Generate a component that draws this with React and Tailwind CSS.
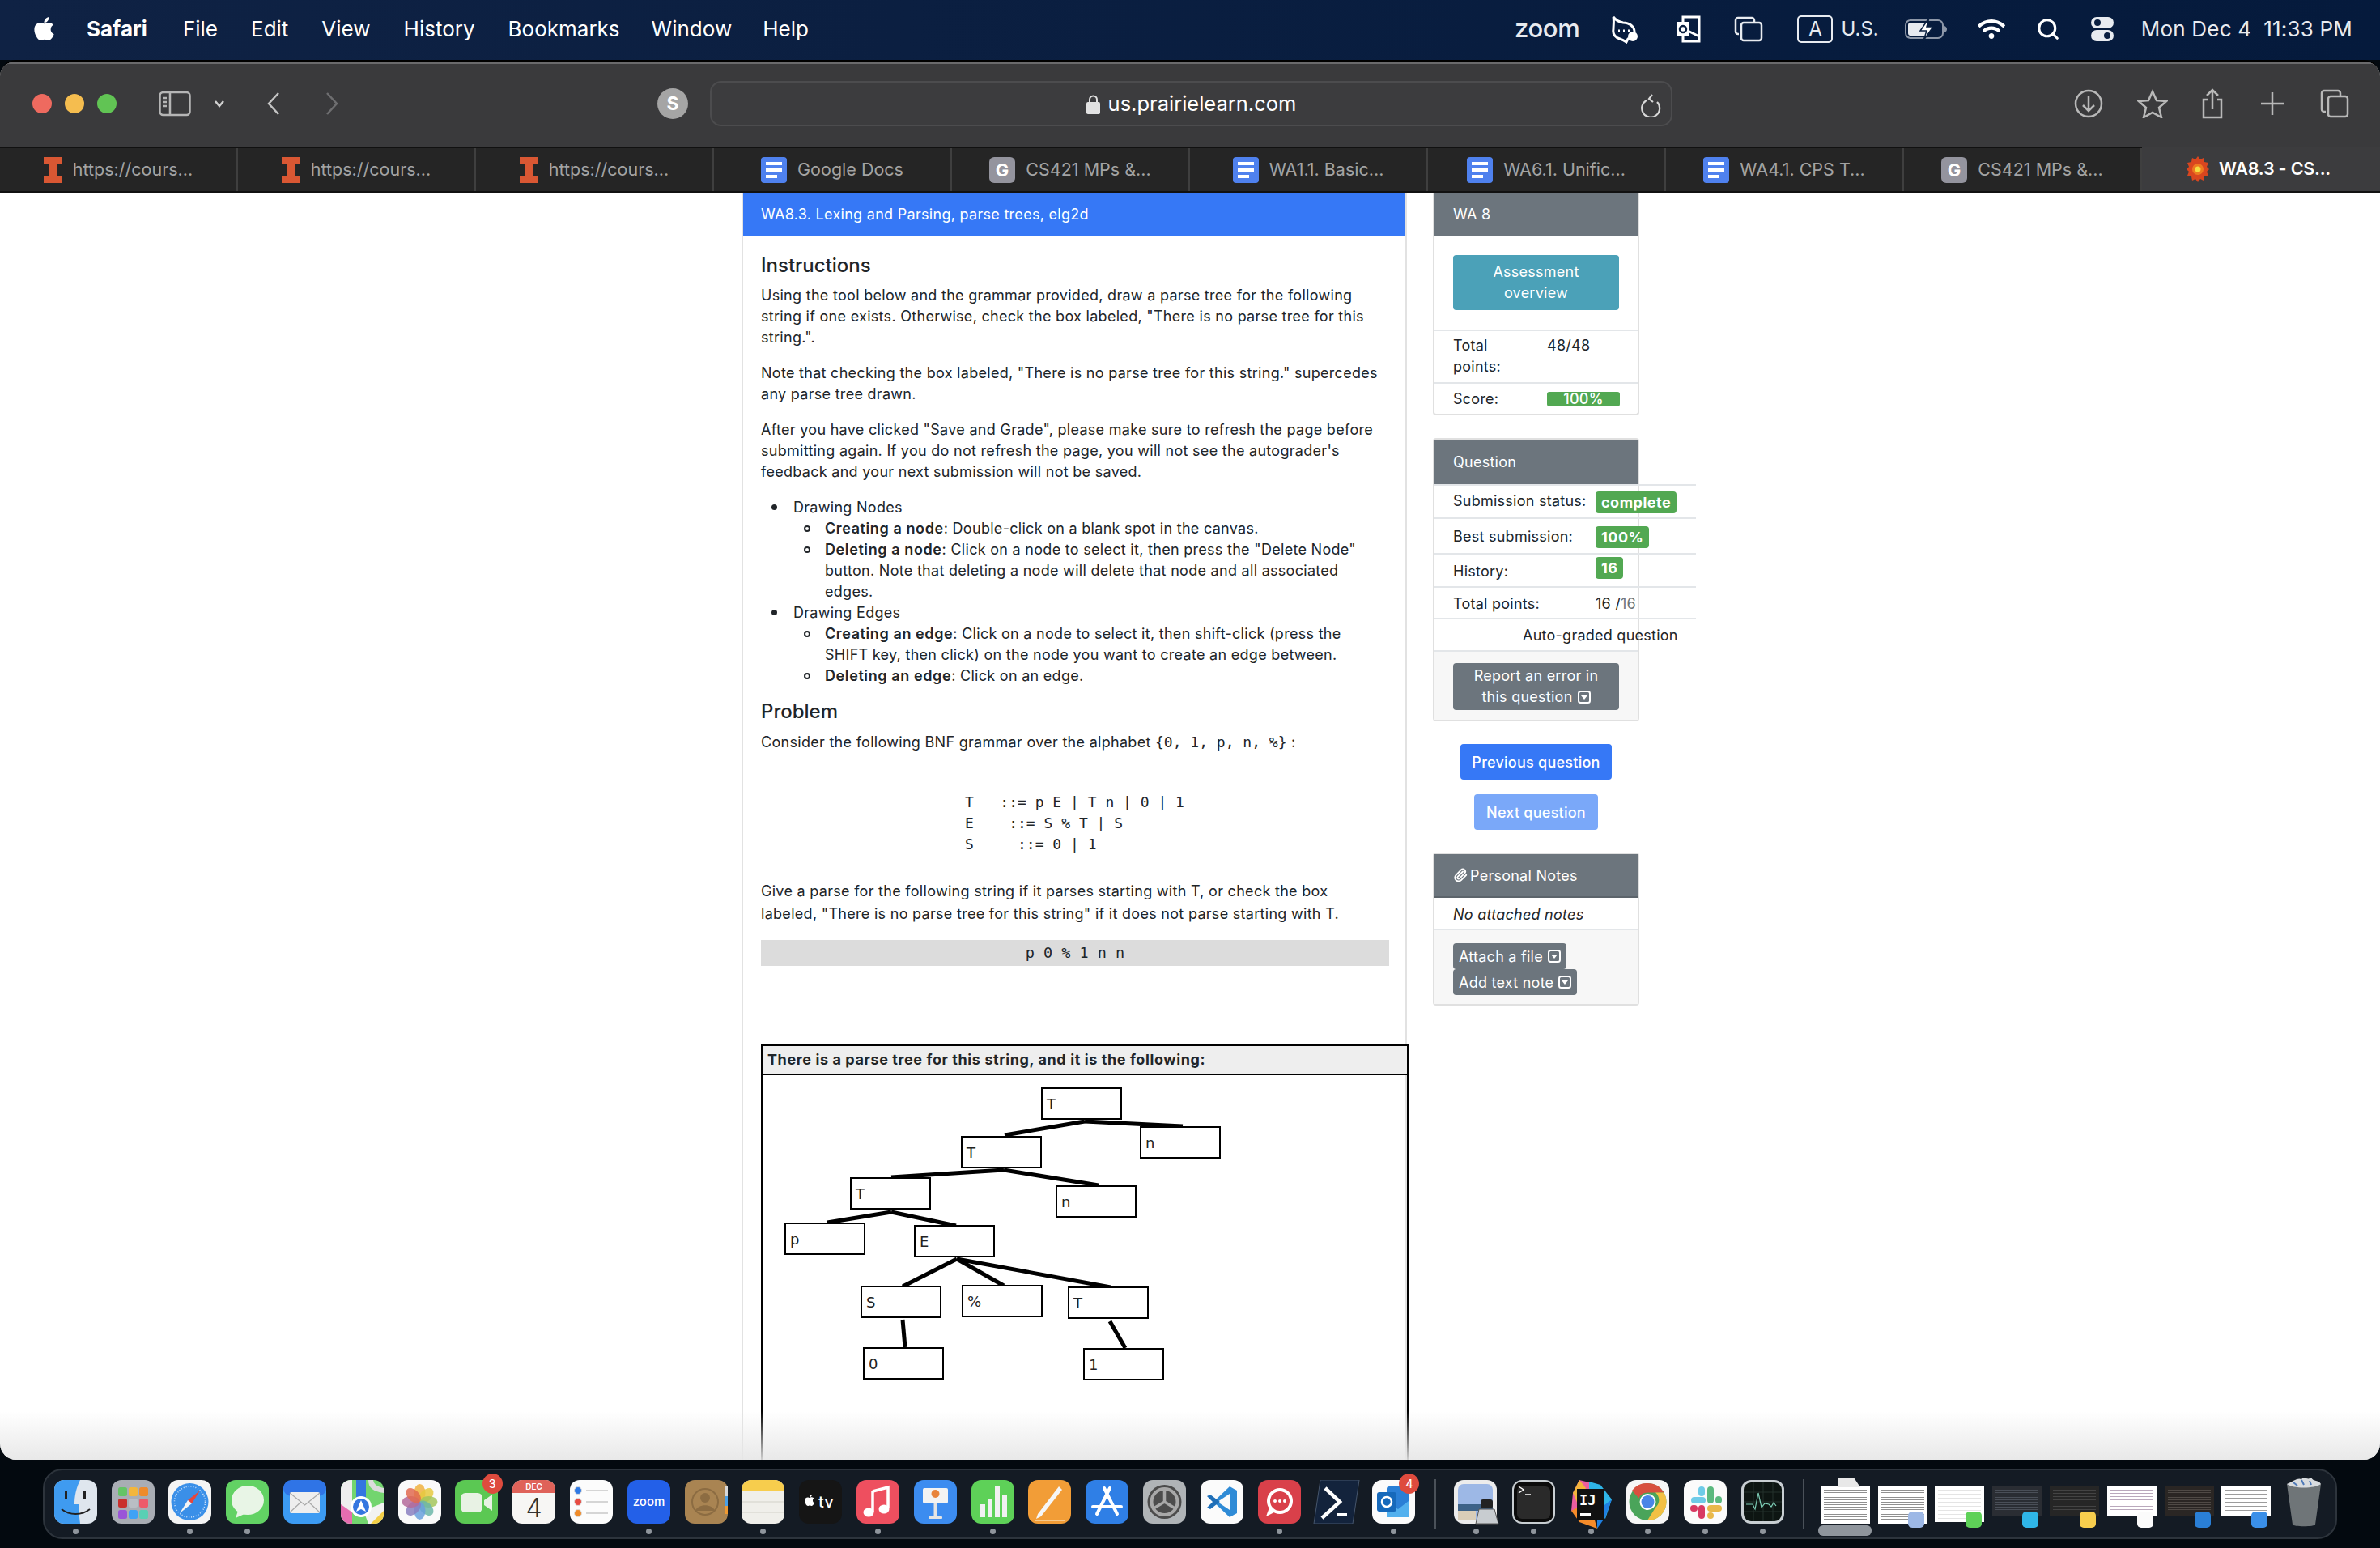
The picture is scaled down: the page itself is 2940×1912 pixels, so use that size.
import { FaApple, FaWifi } from "react-icons/fa";
import { Paperclip, Search } from "lucide-react";

const menuItems = [
  ["File", "ml-[44px]"],
  ["Edit", "ml-[41px]"],
  ["View", "ml-[41px]"],
  ["History", "ml-[41px]"],
  ["Bookmarks", "ml-[41px]"],
  ["Window", "ml-[39px]"],
  ["Help", "ml-[38px]"],
];

function IlliniIcon() {
  return (
    <svg width="23" height="32" viewBox="0 0 23 32">
      <path d="M0 0h23v8h-6v16h6v8H0v-8h6V8H0z" fill="#d95733" />
    </svg>
  );
}

function DocsIcon() {
  return (
    <svg width="32" height="32" viewBox="0 0 32 32">
      <rect width="32" height="32" rx="4" fill="#4f81ee" />
      <rect x="6" y="6" width="20" height="4" fill="#fff" />
      <rect x="6" y="14" width="20" height="4" fill="#fff" />
      <rect x="6" y="22" width="14" height="4" fill="#fff" />
    </svg>
  );
}

function GradeIcon() {
  return (
    <svg width="32" height="32" viewBox="0 0 32 32">
      <rect width="32" height="32" rx="6" fill="#94949e" />
      <text x="16" y="24" textAnchor="middle" fontSize="22" fontWeight="700" fill="#fff" fontFamily="Inter, sans-serif">G</text>
    </svg>
  );
}

function BurstIcon() {
  return (
    <svg width="28" height="32" viewBox="0 0 28 32">
      <path d="M14 0l3 4 4-2 1 5 5 1-2 5 3 3-3 3 2 5-5 1-1 5-4-2-3 4-3-4-4 2-1-5-5-1 2-5-3-3 3-3-2-5 5-1 1-5 4 2z" fill="#d9461f" />
      <circle cx="14" cy="16" r="7" fill="#ee7a20" />
      <circle cx="14" cy="16" r="3.5" fill="#f4dd42" />
    </svg>
  );
}

const tabs = [
  [IlliniIcon, "https://cours..."],
  [IlliniIcon, "https://cours..."],
  [IlliniIcon, "https://cours..."],
  [DocsIcon, "Google Docs"],
  [GradeIcon, "CS421 MPs &..."],
  [DocsIcon, "WA1.1. Basic..."],
  [DocsIcon, "WA6.1. Unific..."],
  [DocsIcon, "WA4.1. CPS T..."],
  [GradeIcon, "CS421 MPs &..."],
];

function MenuBar() {
  return (
    <div className="flex h-[74px] items-center bg-gradient-to-r from-[#0f2244] to-[#051a3c] pb-[3px] pl-[38px] pr-[34px] text-[26px] text-white">
      <FaApple className="mr-[36px] h-[33px] w-[33px]" />
      <span className="font-bold">Safari</span>
      {menuItems.map(([label, gap]) => (
        <span key={label} className={gap}>{label}</span>
      ))}
      <div className="ml-auto flex items-center text-[#e8ebf0]">
        <span className="mr-[36px] text-[31px] font-medium tracking-[-0.01em]">zoom</span>
        <svg className="mr-[44px]" width="38" height="36" viewBox="0 0 38 36" fill="none" stroke="#fff" strokeWidth="3">
          <path d="M6 3c3 4 6 6 12 7 8 0 14 5 14 11 0 5-4 8-8 9l-2 4c-3-2-5-3-8-4-6-2-9-6-8-12 0-5 1-10 0-15z" />
          <path d="M12 20h2M18 20h2M24 20h2" />
          <circle cx="30" cy="27" r="6" fill="#fff" stroke="none" />
        </svg>
        <svg className="mr-[41px]" width="32" height="34" viewBox="0 0 32 34" fill="none" stroke="#fff" strokeWidth="3">
          <rect x="10" y="2" width="20" height="30" />
          <path d="M10 16l20 10" />
          <rect x="2" y="8" width="16" height="18" fill="#fff" stroke="none" />
          <circle cx="10" cy="17" r="4" stroke="#0a1f40" strokeWidth="2.5" />
        </svg>
        <svg className="mr-[42px]" width="36" height="32" viewBox="0 0 36 32" fill="none" stroke="#e8ebf0" strokeWidth="2.5">
          <path d="M6 22H5a3 3 0 0 1-3-3V5a3 3 0 0 1 3-3h17a3 3 0 0 1 3 3v2" />
          <rect x="9" y="8" width="25" height="22" rx="3" />
        </svg>
        <span className="mr-[10px] flex h-[34px] w-[44px] items-center justify-center rounded-[5px] border-2 border-[#e8ebf0] text-[24px] leading-none">A</span>
        <span className="mr-[32px] text-[24px]">U.S.</span>
        <svg className="mr-[38px]" width="52" height="28" viewBox="0 0 52 28">
          <rect x="1" y="3" width="46" height="22" rx="6" fill="none" stroke="#8d97a8" strokeWidth="2" />
          <rect x="4" y="6" width="24" height="16" rx="3" fill="#e8ebf0" />
          <path d="M49 10v8c2-1 3-2 3-4s-1-3-3-4z" fill="#8d97a8" />
          <path d="M30 0L19 16h8l-4 12 12-17h-8z" fill="#fff" stroke="#0a1f40" strokeWidth="1.5" />
        </svg>
        <FaWifi className="mr-[38px] h-[30px] w-[34px] text-white" />
        <Search className="mr-[38px] h-[30px] w-[30px] text-white" strokeWidth={2.5} />
        <svg className="mr-[34px]" width="28" height="30" viewBox="0 0 28 30">
          <rect width="28" height="14" rx="7" fill="#e8ebf0" />
          <circle cx="8" cy="7" r="4" fill="#0a1f40" />
          <rect y="16" width="28" height="14" rx="7" fill="#e8ebf0" />
          <circle cx="20" cy="23" r="4" fill="#0a1f40" />
        </svg>
        <span className="whitespace-pre text-[26px] tracking-[0.2px]">Mon Dec 4  11:33 PM</span>
      </div>
    </div>
  );
}

function Toolbar() {
  return (
    <div className="flex h-[105px] shrink-0 items-center border-t-[3px] border-[#6a6a6c] bg-[#3a3a3c] pb-[4px] pl-[40px] text-[#c8c8c8]">
      <span className="h-[24px] w-[24px] rounded-full bg-[#ee6a5f]" />
      <span className="ml-[16px] h-[24px] w-[24px] rounded-full bg-[#f5bd4f]" />
      <span className="ml-[16px] h-[24px] w-[24px] rounded-full bg-[#61c454]" />
      <svg className="ml-[52px]" width="40" height="32" viewBox="0 0 40 32" fill="none" stroke="#b5b5b5" strokeWidth="2.5">
        <rect x="1.5" y="2" width="37" height="28" rx="4" />
        <path d="M14 2v28M5 9h5M5 14h5M5 19h5" />
      </svg>
      <svg className="ml-[28px]" width="14" height="10" viewBox="0 0 14 10" fill="none" stroke="#d0d0d0" strokeWidth="2.5">
        <path d="M2 2l5 6 5-6" />
      </svg>
      <svg className="ml-[51px]" width="18" height="30" viewBox="0 0 18 30" fill="none" stroke="#c4c4c4" strokeWidth="2.5">
        <path d="M15 2L3 15l12 13" />
      </svg>
      <svg className="ml-[54px]" width="18" height="30" viewBox="0 0 18 30" fill="none" stroke="#6e6e70" strokeWidth="2.5">
        <path d="M3 2l12 13L3 28" />
      </svg>
      <svg className="ml-[393px]" width="38" height="38" viewBox="0 0 38 38">
        <circle cx="19" cy="19" r="19" fill="#a5a5a5" />
        <text x="19" y="27" textAnchor="middle" fontSize="23" fontWeight="700" fill="#fff" fontFamily="Inter, sans-serif">S</text>
      </svg>
      <div className="relative ml-[27px] flex h-[56px] w-[1189px] items-center justify-center rounded-[14px] border-2 border-[#4c4c4e] bg-[#3c3c3e] text-[25.5px] text-white">
        <svg className="mr-[10px]" width="17" height="25" viewBox="0 0 17 25">
          <path d="M4 11V7a4.5 4.5 0 0 1 9 0v4" fill="none" stroke="#e2e2e2" strokeWidth="2" />
          <rect y="10" width="17" height="15" rx="2" fill="#e2e2e2" />
        </svg>
        us.prairielearn.com
        <svg className="absolute right-[12px] top-[13px]" width="26" height="30" viewBox="0 0 26 30" fill="none" stroke="#d8d8d8" strokeWidth="2.2">
          <path d="M8 9a11 11 0 1 0 13 2M15 2l-4 5 5 4" />
        </svg>
      </div>
      <svg className="ml-[496px]" width="36" height="36" viewBox="0 0 36 36" fill="none" stroke="#b8b8b8" strokeWidth="2.5">
        <circle cx="18" cy="18" r="16" />
        <path d="M18 9v17M11 20l7 7 7-7" />
      </svg>
      <svg className="ml-[42px]" width="38" height="36" viewBox="0 0 38 36" fill="none" stroke="#b8b8b8" strokeWidth="2.5">
        <path d="M19 3l5 11 12 1-9 8 3 12-11-6-11 6 3-12-9-8 12-1z" />
      </svg>
      <svg className="ml-[39px]" width="32" height="38" viewBox="0 0 32 38" fill="none" stroke="#b8b8b8" strokeWidth="2.5">
        <path d="M16 26V3M9 9l7-7 7 7M10 14H5v22h22V14h-5" />
      </svg>
      <svg className="ml-[43px]" width="30" height="30" viewBox="0 0 30 30" stroke="#b8b8b8" strokeWidth="2.5">
        <path d="M15 1v28M1 15h28" />
      </svg>
      <svg className="ml-[44px]" width="36" height="36" viewBox="0 0 36 36" fill="none" stroke="#b8b8b8" strokeWidth="2.5">
        <path d="M7 28H5a3 3 0 0 1-3-3V5a3 3 0 0 1 3-3h17a3 3 0 0 1 3 3v3" />
        <rect x="10" y="9" width="24" height="25" rx="3" />
      </svg>
    </div>
  );
}

function TabBar() {
  return (
    <div className="flex h-[57px] shrink-0 border-y-2 border-[#111111] bg-[#252525]">
      {tabs.map(([Icon, label], index) => (
        <div key={index} className="flex w-[294px] items-center justify-center gap-[13px] border-r-2 border-[#3f3f3f] text-[21.5px] text-[#a3a3a3]">
          <Icon />
          <span>{label}</span>
        </div>
      ))}
      <div className="-mt-[2px] flex flex-1 items-center justify-center gap-[12px] bg-[#3c3c3e] pr-[6px] text-[21.5px] font-semibold tracking-[-0.2px] text-white">
        <BurstIcon />
        <span>WA8.3 - CS...</span>
      </div>
    </div>
  );
}

const treeNodes = [
  ["T", 1287, 1344],
  ["n", 1409, 1392],
  ["T", 1188, 1404],
  ["T", 1051, 1455],
  ["n", 1305, 1465],
  ["p", 970, 1511],
  ["E", 1130, 1514],
  ["S", 1064, 1589],
  ["%", 1189, 1588],
  ["T", 1320, 1590],
  ["0", 1067, 1665],
  ["1", 1339, 1666],
];

const treeEdges = [
  [1340, 1385, 1241, 1402],
  [1340, 1385, 1461, 1391],
  [1240, 1445, 1101, 1454],
  [1240, 1445, 1357, 1464],
  [1101, 1497, 1022, 1510],
  [1101, 1497, 1181, 1514],
  [1182, 1555, 1115, 1589],
  [1182, 1555, 1240, 1588],
  [1182, 1555, 1372, 1590],
  [1115, 1630, 1118, 1664],
  [1371, 1632, 1390, 1665],
];

function ParseTree() {
  return (
    <svg className="block" width="796" height="480" viewBox="942 1328 796 480">
      {treeEdges.map(([x1, y1, x2, y2], i) => (
        <line key={i} x1={x1} y1={y1} x2={x2} y2={y2} stroke="#000" strokeWidth="5" />
      ))}
      {treeNodes.map(([label, x, y], i) => (
        <g key={i}>
          <rect x={x} y={y} width="98" height="38" fill="#fff" stroke="#000" strokeWidth="2" />
          <text x={x + 6} y={y + 26} fontSize="18" fill="#222" fontFamily="'DejaVu Sans', sans-serif">{label}</text>
        </g>
      ))}
    </svg>
  );
}

function Disc() {
  return <span className="absolute -left-[27px] top-[9px] h-[7px] w-[7px] rounded-full bg-[#212529]" />;
}

function Ring() {
  return <span className="absolute -left-[26px] top-[9px] h-[8px] w-[8px] rounded-full border-2 border-[#212529]" />;
}

function MainColumn() {
  return (
    <div className="ml-[916px] w-[822px] shrink-0 border-x-2 border-[#e2e2e2]">
      <div className="flex h-[53px] items-center bg-[#3678f6] pl-[22px] text-[18px] tracking-[0.29px] text-white">
        WA8.3. Lexing and Parsing, parse trees, elg2d
      </div>
      <div className="pl-[22px] pt-[22px] text-[18px] leading-[26px] tracking-[0.29px] text-[#212529]">
        <h2 className="mb-[10px] text-[24px] font-medium leading-[29px] tracking-normal">Instructions</h2>
        <div className="w-[790px]">
          <p className="mb-[18px]">
            Using the tool below and the grammar provided, draw a parse tree for the following<br />
            string if one exists. Otherwise, check the box labeled, "There is no parse tree for this<br />
            string.".
          </p>
          <p className="mb-[18px]">
            Note that checking the box labeled, "There is no parse tree for this string." supercedes<br />
            any parse tree drawn.
          </p>
          <p className="mb-[18px]">
            After you have clicked "Save and Grade", please make sure to refresh the page before<br />
            submitting again. If you do not refresh the page, you will not see the autograder's<br />
            feedback and your next submission will not be saved.
          </p>
          <ul className="mb-[16px] list-none pl-[40px]">
            <li className="relative">
              <Disc />
              Drawing Nodes
              <ul className="list-none pl-[39px]">
                <li className="relative"><Ring /><b className="font-semibold tracking-[0.6px]">Creating a node</b>: Double-click on a blank spot in the canvas.</li>
                <li className="relative">
                  <Ring />
                  <b className="font-semibold tracking-[0.6px]">Deleting a node</b>: Click on a node to select it, then press the "Delete Node"<br />
                  button. Note that deleting a node will delete that node and all associated<br />
                  edges.
                </li>
              </ul>
            </li>
            <li className="relative">
              <Disc />
              Drawing Edges
              <ul className="list-none pl-[39px]">
                <li className="relative">
                  <Ring />
                  <b className="font-semibold tracking-[0.6px]">Creating an edge</b>: Click on a node to select it, then shift-click (press the<br />
                  SHIFT key, then click) on the node you want to create an edge between.
                </li>
                <li className="relative"><Ring /><b className="font-semibold tracking-[0.6px]">Deleting an edge</b>: Click on an edge.</li>
              </ul>
            </li>
          </ul>
          <h2 className="mb-[11px] text-[24px] font-medium leading-[29px] tracking-normal">Problem</h2>
          <p>
            Consider the following BNF grammar over the alphabet{" "}
            <code className="font-['DejaVu_Sans_Mono',monospace] text-[18px] tracking-normal">{"{0, 1, p, n, %}"}</code> :
          </p>
          <pre className="ml-[252px] mt-[48px] font-['DejaVu_Sans_Mono',monospace] text-[18px] leading-[26px] tracking-normal">
            {"T   ::= p E | T n | 0 | 1\nE    ::= S % T | S\nS     ::= 0 | 1"}
          </pre>
          <p className="mt-[31px] leading-[28px]">
            Give a parse for the following string if it parses starting with T, or check the box<br />
            labeled, "There is no parse tree for this string" if it does not parse starting with T.
          </p>
        </div>
        <div className="mt-[18px] flex h-[32px] w-[776px] items-center justify-center bg-[#dcdcdc] font-['DejaVu_Sans_Mono',monospace] text-[18.5px] tracking-normal">
          p 0 % 1 n n
        </div>
        <div className="mt-[97px] w-[800px] border-2 border-black">
          <div className="flex h-[36px] items-center border-b-2 border-black bg-[#eeeeee] pl-[6px] font-bold tracking-[0.6px]">
            There is a parse tree for this string, and it is the following:
          </div>
          <ParseTree />
        </div>
      </div>
    </div>
  );
}

function Caret() {
  return (
    <svg className="ml-[6px] inline align-[-2px]" width="16" height="16" viewBox="0 0 16 16">
      <rect x="1" y="1" width="14" height="14" rx="2.5" fill="none" stroke="#fff" strokeWidth="2" />
      <path d="M4 6h8l-4 5z" fill="#fff" />
    </svg>
  );
}

function Badge({ children, extra }) {
  return (
    <span className={`flex h-[27px] items-center rounded-[4px] bg-[#52a852] px-[7px] text-[18px] font-bold tracking-[0.5px] text-white ${extra || ""}`}>
      {children}
    </span>
  );
}

function Sidebar() {
  return (
    <div className="ml-[32px] w-[255px] shrink-0 text-[18px] tracking-[0.25px] text-[#212529]">
      <div className="rounded-b-[4px] border-x-2 border-b-2 border-[#e0e0e0]">
        <div className="flex h-[54px] items-center bg-[#6c757d] pb-[1px] pl-[23px] text-white">WA 8</div>
        <div className="border-b-2 border-[#e3e6e9] px-[23px] pb-[24px] pt-[23px]">
          <div className="flex h-[68px] items-center justify-center rounded-[4px] bg-[#4ba1b8] text-center leading-[26px] text-white">
            Assessment<br />overview
          </div>
        </div>
        <div className="flex h-[65px] border-b-2 border-[#e3e6e9] pl-[23px] pt-[5px] leading-[26px]">
          <span className="w-[116px]">Total<br />points:</span>
          <span>48/48</span>
        </div>
        <div className="flex h-[37px] items-center pl-[23px]">
          <span className="w-[116px]">Score:</span>
          <span className="flex h-[18px] w-[90px] items-center justify-center rounded-[3px] bg-[#52a852] font-medium text-white">100%</span>
        </div>
      </div>
      <div className="mt-[28px] rounded-[4px] border-x-2 border-y-2 border-[#e0e0e0]">
        <div className="flex h-[55px] items-center bg-[#6c757d] pl-[23px] text-white">Question</div>
        <div className="w-[323px]">
          <div className="flex h-[43px] items-center border-y-2 border-[#e3e6e9] pl-[23px]">
            <span className="mb-[2px] w-[176px]">Submission status:</span>
            <Badge extra="mt-[2px]">complete</Badge>
          </div>
          <div className="flex h-[44px] items-center border-b-2 border-[#e3e6e9] pl-[23px]">
            <span className="w-[176px]">Best submission:</span>
            <Badge extra="mt-[2px]">100%</Badge>
          </div>
          <div className="flex h-[41px] items-center border-b-2 border-[#e3e6e9] pl-[23px]">
            <span className="mt-[1px] w-[176px]">History:</span>
            <Badge extra="mb-[7px]">16</Badge>
          </div>
          <div className="flex h-[39px] items-center border-b-2 border-[#e3e6e9] pl-[23px]">
            <span className="mt-[1px] w-[176px]">Total points:</span>
            <span className="mt-[1px]">16 /<span className="text-[#6c757d]">16</span></span>
          </div>
        </div>
        <div className="flex h-[38px] w-[301px] items-center whitespace-nowrap pl-[109px] pt-[1px]">Auto-graded question</div>
        <div className="border-t-2 border-[#e3e6e9] bg-[#f7f7f7] px-[23px] pb-[12px] pt-[14px]">
          <div className="flex h-[58px] items-center justify-center rounded-[4px] bg-[#6c757d] text-center leading-[26px] text-white">
            <span>Report an error in<br />this question<Caret /></span>
          </div>
        </div>
      </div>
      <div className="mt-[28px] flex flex-col items-center">
        <div className="flex h-[44px] w-[187px] items-center justify-center rounded-[4px] bg-[#3678f6] font-medium text-white">Previous question</div>
        <div className="mt-[18px] flex h-[44px] w-[153px] items-center justify-center rounded-[4px] bg-[#7aa8f9] font-medium text-white">Next question</div>
      </div>
      <div className="mt-[28px] rounded-[4px] border-2 border-[#e0e0e0]">
        <div className="flex h-[54px] items-center border-b-2 border-[#5c646b] bg-[#6c757d] pl-[23px] text-white">
          <Paperclip className="mr-[3px] h-[18px] w-[18px]" strokeWidth={2.5} />
          Personal Notes
        </div>
        <div className="flex h-[40px] items-center border-b-2 border-[#e3e6e9] pl-[23px] pt-[2px] italic">No attached notes</div>
        <div className="flex flex-col items-start bg-[#f7f7f7] pb-[11px] pl-[23px] pt-[16px]">
          <span className="flex h-[32px] items-center rounded-[4px] bg-[#6c757d] px-[7px] text-white">Attach a file<Caret /></span>
          <span className="flex h-[32px] items-center rounded-[4px] bg-[#6c757d] px-[7px] text-white">Add text note<Caret /></span>
        </div>
      </div>
    </div>
  );
}

function Shell({ bg, children }) {
  return (
    <svg width="53" height="54" viewBox="0 0 53 54">
      <rect width="53" height="54" rx="12" fill={bg} />
      {children}
    </svg>
  );
}

const dockIcons = {
  finder: (
    <Shell bg="#dfe6ee">
      <path d="M12 0h20c-5 10-7 20-7 30h5c0 8 1 16 2 24H12A12 12 0 0 1 0 42V12A12 12 0 0 1 12 0z" fill="#3f9bf0" />
      <rect x="13" y="14" width="3" height="9" fill="#222" />
      <rect x="36" y="14" width="3" height="9" fill="#222" />
      <path d="M9 36c10 8 25 8 35 0" fill="none" stroke="#222" strokeWidth="2" />
    </Shell>
  ),
  launchpad: (
    <Shell bg="#a9adb4">
      {[["#65c466", 8, 9], ["#f2b63c", 21, 9], ["#ef8b2c", 34, 9], ["#c9302c", 8, 23], ["#b9bec4", 21, 23], ["#ee5a6a", 34, 23], ["#9a55d8", 8, 37], ["#3fa2f5", 21, 37], ["#59d0b4", 34, 37]].map(([c, x, y]) => (
        <rect key={c} x={x} y={y} width="11" height="11" rx="2.5" fill={c} />
      ))}
    </Shell>
  ),
  safari: (
    <Shell bg="#f4f4f4">
      <circle cx="26.5" cy="27" r="23" fill="#3a8fe8" />
      <circle cx="26.5" cy="27" r="19" fill="none" stroke="#cfe3fa" strokeWidth="1.5" strokeDasharray="1 2" />
      <path d="M39 13L24 25l5 4z" fill="#e9453a" />
      <path d="M14 41l10-16 5 4z" fill="#f4f4f4" />
    </Shell>
  ),
  messages: (
    <Shell bg="#62d264">
      <ellipse cx="27" cy="25" rx="20" ry="18" fill="#e8f5e6" />
      <path d="M15 38l-3 9 11-5z" fill="#e8f5e6" />
    </Shell>
  ),
  mail: (
    <Shell bg="#3c9bf3">
      <rect width="53" height="20" rx="10" fill="#2f74e6" />
      <rect x="8" y="15" width="37" height="26" rx="2" fill="#eeeeee" />
      <path d="M8 16l18.5 15L45 16M8 40l14-13M45 40L31 27" fill="none" stroke="#a9a9a9" strokeWidth="1.2" />
    </Shell>
  ),
  maps: (
    <Shell bg="#73d56f">
      <path d="M0 12A12 12 0 0 1 12 0h2v54H12A12 12 0 0 1 0 42z" fill="#eee" />
      <path d="M0 30l14 10v14H12A12 12 0 0 1 0 42z" fill="#e66db0" />
      <rect x="19" y="0" width="12" height="30" fill="#3476e0" />
      <path d="M34 0c0 10 6 14 19 16v-6C44 8 41 5 40 0z" fill="#dcdcdc" />
      <path d="M28 38l25-10v14a12 12 0 0 1-12 12H34z" fill="#f2f2f2" />
      <path d="M37 54l16-16v4a12 12 0 0 1-12 12z" fill="#f4cf47" />
      <circle cx="25" cy="33" r="13" fill="#fff" />
      <circle cx="25" cy="33" r="10" fill="#3476e0" />
      <path d="M25 25l6 14-6-3-6 3z" fill="#fff" />
    </Shell>
  ),
  photos: (
    <Shell bg="#fafafa">
      {[["#f0b23f", 0], ["#e6c93f", 45], ["#a3c65a", 90], ["#6cb6a8", 135], ["#6aa0dc", 180], ["#8a7fc0", 225], ["#b46a9a", 270], ["#e06a50", 315]].map(([c, r]) => (
        <ellipse key={r} cx="26.5" cy="16" rx="7" ry="11" fill={c} opacity="0.85" transform={`rotate(${r} 26.5 27)`} />
      ))}
    </Shell>
  ),
  facetime: (
    <Shell bg="#5bc853">
      <rect x="7" y="16" width="27" height="24" rx="6" fill="#e8f2e4" />
      <path d="M36 25l10-7v20l-10-7z" fill="#e8f2e4" />
    </Shell>
  ),
  calendar: (
    <Shell bg="#f7f6f4">
      <path d="M0 16V12A12 12 0 0 1 12 0h29a12 12 0 0 1 12 12v4z" fill="#df6259" />
      <text x="26.5" y="12" textAnchor="middle" fontSize="10" fontWeight="600" fill="#fff" fontFamily="Inter, sans-serif">DEC</text>
      <text x="26.5" y="46" textAnchor="middle" fontSize="32" fontWeight="300" fill="#333" fontFamily="Inter, sans-serif">4</text>
    </Shell>
  ),
  reminders: (
    <Shell bg="#fcfcfc">
      {[["#2f7ae5", 13], ["#e84b42", 27], ["#f08c2a", 41]].map(([c, y]) => (
        <g key={y}>
          <circle cx="10" cy={y} r="4.5" fill={c} stroke="#ddd" />
          <path d={`M20 ${y}h27`} stroke="#c9c9c9" strokeWidth="1.5" />
        </g>
      ))}
    </Shell>
  ),
  zoom: (
    <Shell bg="#2360e8">
      <text x="26.5" y="32" textAnchor="middle" fontSize="15" fontWeight="500" fill="#fff" fontFamily="Inter, sans-serif">zoom</text>
    </Shell>
  ),
  contacts: (
    <Shell bg="#a98452">
      <rect x="50" y="8" width="3" height="12" fill="#d8d8d8" />
      <rect x="50" y="20" width="3" height="12" fill="#4aa0e6" />
      <rect x="50" y="32" width="3" height="10" fill="#ef9a32" />
      <circle cx="25" cy="27" r="16" fill="none" stroke="#8c6c42" strokeWidth="2" />
      <circle cx="25" cy="22" r="6" fill="#8c6c42" />
      <path d="M13 38c3-9 21-9 24 0" fill="#8c6c42" />
    </Shell>
  ),
  notes: (
    <Shell bg="#f0efea">
      <path d="M0 14V12A12 12 0 0 1 12 0h29a12 12 0 0 1 12 12v2z" fill="#f7cd4d" />
      <path d="M0 27h53M0 40h53" stroke="#dcdbd4" strokeWidth="1.5" />
    </Shell>
  ),
  tv: (
    <Shell bg="#151515">
      <FaApple x="5" y="17" width="18" height="18" color="#fff" />
      <text x="24" y="34" fontSize="20" fontWeight="500" fill="#fff" fontFamily="Inter, sans-serif">tv</text>
    </Shell>
  ),
  music: (
    <Shell bg="#ee4f5f">
      <path d="M20 14l19-5v26" fill="none" stroke="#fff" strokeWidth="3.5" />
      <path d="M20 14v26" stroke="#fff" strokeWidth="3.5" />
      <ellipse cx="15" cy="40" rx="6.5" ry="5.5" fill="#fff" />
      <ellipse cx="34" cy="36" rx="6.5" ry="5.5" fill="#fff" />
    </Shell>
  ),
  keynote: (
    <Shell bg="#3c8cf0">
      <rect x="11" y="10" width="31" height="19" rx="2" fill="#f3f3f3" />
      <circle cx="26.5" cy="17" r="5" fill="#e8833a" />
      <rect x="24.5" y="29" width="4" height="16" fill="#e4e4e4" />
      <rect x="18" y="45" width="17" height="3" rx="1" fill="#e4e4e4" />
    </Shell>
  ),
  numbers: (
    <Shell bg="#5ed158">
      <rect x="11" y="30" width="6" height="16" fill="#f1f1f1" />
      <rect x="20" y="24" width="6" height="22" fill="#f1f1f1" />
      <rect x="29" y="8" width="6" height="38" fill="#f1f1f1" />
      <rect x="38" y="18" width="6" height="28" fill="#f1f1f1" />
    </Shell>
  ),
  pages: (
    <Shell bg="#f29d37">
      <path d="M38 8L12 42l-2 6 6-3 26-33z" fill="#f6f6f6" />
      <path d="M8 50h37" stroke="#f9d9a8" strokeWidth="1.5" />
    </Shell>
  ),
  appstore: (
    <Shell bg="#2f7fe6">
      <path d="M23 10l16 32M30 10L14 42M9 33h35" stroke="#fff" strokeWidth="4" strokeLinecap="round" />
    </Shell>
  ),
  settings: (
    <Shell bg="#b0b4b7">
      <circle cx="26.5" cy="27" r="21" fill="#4c4c4c" />
      <circle cx="26.5" cy="27" r="16" fill="none" stroke="#a8a8a8" strokeWidth="4" />
      <path d="M26.5 27V12M26.5 27L13 35M26.5 27l13 8" stroke="#a8a8a8" strokeWidth="3.5" />
    </Shell>
  ),
  vscode: (
    <Shell bg="#fbfbfb">
      <path d="M36 8l9 5v28l-9 5-20-19z" fill="#2f8bd6" />
      <path d="M36 17L21 27l15 10z" fill="#fbfbfb" />
      <path d="M8 20l4-2 12 9-12 9-4-2 7-7z" fill="#1f6fb8" />
    </Shell>
  ),
  rocket: (
    <Shell bg="#d9404a">
      <circle cx="27" cy="26" r="16" fill="#fff" />
      <path d="M14 34l-4 11 12-6z" fill="#fff" />
      <circle cx="27" cy="26" r="12" fill="#d9404a" />
      <circle cx="21" cy="26" r="2" fill="#fff" />
      <circle cx="27" cy="26" r="2" fill="#fff" />
      <circle cx="33" cy="26" r="2" fill="#fff" />
    </Shell>
  ),
  powershell: (
    <svg width="60" height="54" viewBox="0 0 60 54">
      <path d="M10 0h48l-8 54H2z" fill="#13233c" stroke="#46566c" />
      <path d="M16 10l18 17-22 20" fill="none" stroke="#fff" strokeWidth="4.5" />
      <rect x="30" y="41" width="13" height="4" fill="#fff" />
    </svg>
  ),
  outlook: (
    <Shell bg="#fbfbfb">
      <rect x="18" y="8" width="27" height="38" rx="3" fill="#2a7fd6" />
      <path d="M18 26l14 10 13-10v20H18z" fill="#52b0ee" />
      <rect x="6" y="15" width="24" height="24" rx="3" fill="#1669bb" />
      <circle cx="18" cy="27" r="6" fill="none" stroke="#fff" strokeWidth="2.5" />
    </Shell>
  ),
  preview: (
    <svg width="56" height="56" viewBox="0 0 56 56">
      <rect width="53" height="54" rx="12" fill="#ececec" />
      <rect x="5" y="5" width="43" height="44" rx="7" fill="#9db8e6" />
      <rect x="5" y="30" width="43" height="8" fill="#3d6288" />
      <rect x="5" y="38" width="22" height="11" fill="#d9cdb8" />
      <rect x="33" y="24" width="15" height="11" rx="3" fill="#222" />
      <path d="M31 36h19l5 18H27z" fill="#c8ccd0" stroke="#555" />
    </svg>
  ),
  terminal: (
    <Shell bg="#c8ced2">
      <rect x="2" y="2" width="49" height="50" rx="10" fill="#0b0b0b" />
      <rect x="6" y="8" width="41" height="40" rx="6" fill="#2a2a2a" />
      <path d="M8 8l6 4-6 4" fill="none" stroke="#fff" strokeWidth="1.5" />
      <path d="M16 18h7" stroke="#fff" strokeWidth="1.5" />
    </Shell>
  ),
  intellij: (
    <svg width="56" height="60" viewBox="0 0 56 60">
      <path d="M6 16L14 0l16 4-4 30-22 4z" fill="#ec5d9f" />
      <path d="M26 2l14 4 14 18-8 24-20-20z" fill="#2fb6e8" />
      <path d="M4 38l22-12 10 34-22-8z" fill="#f58b2a" />
      <path d="M6 16L14 0l8 10-10 20z" fill="#f4b43c" />
      <path d="M36 60l10-14 8-22-18 14z" fill="#1f7fe0" />
      <rect x="11" y="11" width="34" height="38" fill="#111" />
      <text x="14" y="31" fontSize="17" fontWeight="700" fill="#fff" fontFamily="'DejaVu Sans Mono', monospace">IJ</text>
      <rect x="15" y="41" width="13" height="3" fill="#fff" />
    </svg>
  ),
  chrome: (
    <Shell bg="#f6f6f6">
      <circle cx="26.5" cy="27" r="23" fill="#4aa45a" />
      <path d="M26.5 4a23 23 0 0 1 20 11.5H26.5a12 12 0 0 0-11 7L7 13a23 23 0 0 1 19.500-9z" fill="#d8503f" />
      <path d="M46.500 15.500A23 23 0 0 1 26 50l10-16a12 12 0 0 0 0-18.500z" fill="#f2c044" />
      <circle cx="26.5" cy="27" r="10" fill="#fff" />
      <circle cx="26.5" cy="27" r="8" fill="#4a86e8" />
    </Shell>
  ),
  slack: (
    <Shell bg="#fbfbfb">
      <rect x="9" y="21" width="18" height="8" rx="4" fill="#6ecbe8" />
      <rect x="18" y="8" width="8" height="12" rx="4" fill="#6ecbe8" />
      <rect x="29" y="8" width="8" height="21" rx="4" fill="#5cb97f" />
      <rect x="39" y="20" width="8" height="9" rx="4" fill="#5cb97f" />
      <rect x="29" y="31" width="18" height="8" rx="4" fill="#e9b84a" />
      <rect x="29" y="40" width="8" height="8" rx="4" fill="#e9b84a" />
      <rect x="18" y="31" width="8" height="17" rx="4" fill="#d83a63" />
      <rect x="8" y="31" width="9" height="8" rx="4" fill="#d83a63" />
    </Shell>
  ),
  activity: (
    <Shell bg="#c8ced2">
      <rect x="3" y="3" width="47" height="48" rx="9" fill="#0d1512" />
      <path d="M3 15h47M3 27h47M3 39h47M15 3v48M27 3v48M39 3v48" stroke="#24332c" />
      <path d="M6 30h8l3 6 4-20 4 18 4-5 5 1 3 3 3-5 3 4" fill="none" stroke="#7fd0b8" strokeWidth="1.2" />
    </Shell>
  ),
};

const dockOrder = [
  ["finder", true], ["launchpad"], ["safari", true], ["messages", true], ["mail"], ["maps"], ["photos"],
  ["facetime", false, "3"], ["calendar"], ["reminders"], ["zoom", true], ["contacts"], ["notes", true], ["tv"],
  ["music", true], ["keynote"], ["numbers", true], ["pages"], ["appstore"], ["settings"], ["vscode"],
  ["rocket", true], ["powershell"], ["outlook", true, "4"],
];

const dockOrderRight = [
  ["preview", true], ["terminal", true], ["intellij", true], ["chrome", true], ["slack", true], ["activity", true],
];

const thumbs = [
  { paper: "bg-white", lines: "bg-[repeating-linear-gradient(#8f8f8f_0_1px,transparent_1px_3px)]", height: "h-[46px]", chip: null },
  { paper: "bg-white", lines: "bg-[repeating-linear-gradient(#8f8f8f_0_1px,transparent_1px_3px)]", height: "h-[46px]", chip: "#9db8e6" },
  { paper: "bg-white", lines: "bg-[repeating-linear-gradient(#e4e4e4_0_1px,transparent_1px_5px)]", height: "h-[44px]", chip: "#5ed158" },
  { paper: "bg-[#2a2d33]", lines: "bg-[repeating-linear-gradient(#4a4f58_0_1px,transparent_1px_3px)]", height: "h-[36px]", chip: "#2fb6e8" },
  { paper: "bg-[#262626]", lines: "bg-[repeating-linear-gradient(#444444_0_1px,transparent_1px_4px)]", height: "h-[36px]", chip: "#f7cd4d" },
  { paper: "bg-white", lines: "bg-[repeating-linear-gradient(#b9a8bc_0_1px,transparent_1px_4px)]", height: "h-[36px]", chip: "#fbfbfb" },
  { paper: "bg-[#2a2624]", lines: "bg-[repeating-linear-gradient(#4f4a46_0_1px,transparent_1px_3px)]", height: "h-[36px]", chip: "#2a7fd6" },
  { paper: "bg-white", lines: "bg-[repeating-linear-gradient(#9c9c9c_0_1px,transparent_1px_5px)]", height: "h-[36px]", chip: "#3a8fe8" },
];

function DockCell({ name, running, badge }) {
  return (
    <div className="relative flex h-[83px] w-[70.8px] shrink-0 flex-col items-center pt-[12px]">
      {dockIcons[name]}
      {badge ? (
        <span className="absolute left-[42px] top-[4px] flex h-[25px] w-[25px] items-center justify-center rounded-full bg-[#de4b3e] text-[14px] font-medium text-white">{badge}</span>
      ) : null}
      {running ? <span className="absolute bottom-[4px] h-[7px] w-[7px] rounded-full bg-[#8f959c]" /> : null}
    </div>
  );
}

function Thumb({ paper, lines, height, chip }) {
  return (
    <div className="relative flex h-[83px] w-[70.8px] shrink-0 justify-center pt-[20px]">
      <div className={`w-[61px] p-[4px] ${height} ${paper}`}>
        <div className={`h-full w-full ${lines}`} />
      </div>
      {chip ? (
        <span className="absolute left-[42px] top-[51px] h-[20px] w-[20px] rounded-[5px]" style={{ backgroundColor: chip }} />
      ) : null}
    </div>
  );
}

function Dock() {
  return (
    <div className="mx-[53px] mt-[11px] flex h-[87px] w-[2834px] rounded-[24px] border-2 border-[#2d343c] bg-[#141b24] pl-[3px]">
      {dockOrder.map(([name, running, badge]) => (
        <DockCell key={name} name={name} running={running} badge={badge} />
      ))}
      <div className="flex w-[31px] shrink-0 justify-center pt-[11px]">
        <div className="h-[62px] w-[2px] bg-[#4a5159]" />
      </div>
      {dockOrderRight.map(([name, running]) => (
        <DockCell key={name} name={name} running={running} />
      ))}
      <div className="flex w-[31px] shrink-0 justify-center pt-[11px]">
        <div className="h-[62px] w-[2px] bg-[#4a5159]" />
      </div>
      <div className="relative flex">
        {thumbs.map((thumb, i) => (
          <Thumb key={i} {...thumb} />
        ))}
        <svg className="absolute left-[20px] top-[7px]" width="42" height="14" viewBox="0 0 42 14">
          <path d="M6 14V2h20l8 12z" fill="#e8e8e8" />
        </svg>
        <span className="absolute bottom-[2px] left-[2px] h-[13px] w-[66px] rounded-[6px] bg-[#8f959c]" />
      </div>
      <div className="flex h-[83px] w-[70.8px] shrink-0 items-center justify-center pb-[6px]">
        <svg width="50" height="64" viewBox="0 0 50 64">
          <path d="M4 10l7 50c0 3 28 3 28 0l7-50z" fill="#6f7578" />
          <path d="M4 10c8 6 34 6 42 0-3-6-9-2-12-8-4 4-8-2-12 2-5-2-9 2-18 6z" fill="#d9dcdf" />
          <path d="M12 8l5 4M22 5l3 6M32 6l2 5" stroke="#4f7ab8" strokeWidth="2" />
        </svg>
      </div>
    </div>
  );
}

export default function App() {
  return (
    <div className="flex h-[1912px] w-[2940px] flex-col overflow-hidden bg-[#03090f] font-[Inter,sans-serif]">
      <MenuBar />
      <div className="relative flex h-[1729px] shrink-0 flex-col overflow-hidden rounded-[20px] border-t-2 border-black bg-white">
        <Toolbar />
        <TabBar />
        <div className="flex flex-1 overflow-hidden">
          <MainColumn />
          <Sidebar />
        </div>
        <div className="pointer-events-none absolute bottom-0 left-0 h-[60px] w-full bg-gradient-to-b from-transparent to-[#e6e6e6]/90" />
      </div>
      <Dock />
    </div>
  );
}
